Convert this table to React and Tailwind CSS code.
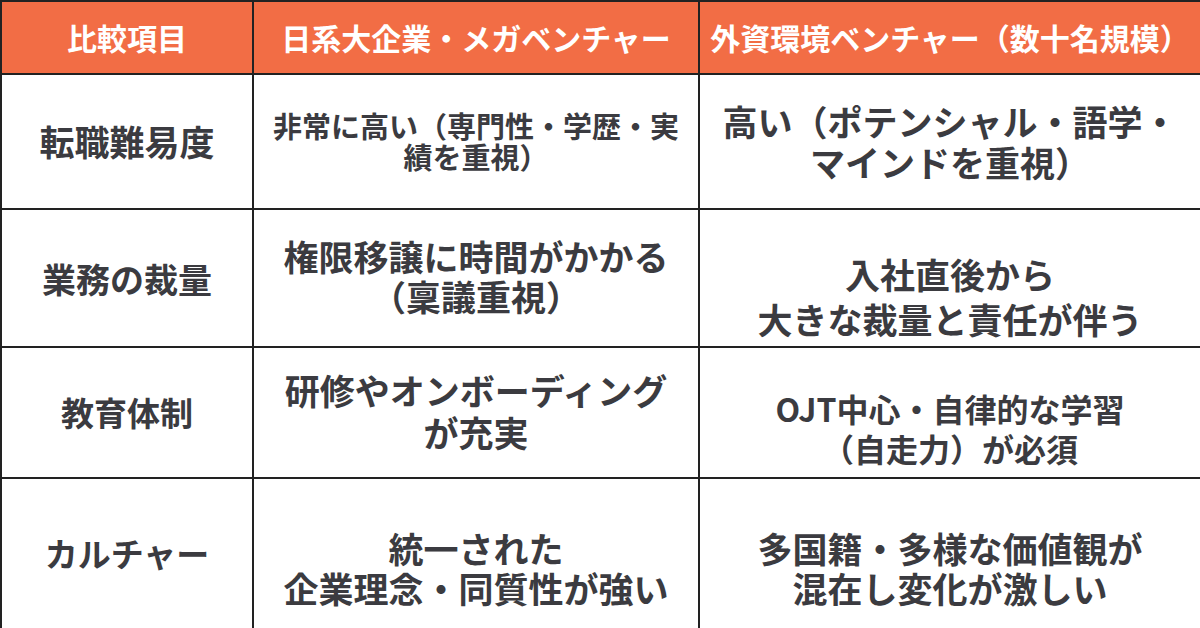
const headers = ["比較項目", "日系大企業・メガベンチャー", "外資環境ベンチャー（数十名規模）"];

const rows = [
  {
    label: "転職難易度",
    labelCls: "text-[35px]",
    cells: [
      { lines: ["非常に高い（専門性・学歴・実", "績を重視）"], cls: "text-[29px] leading-[31px] pb-[1px]" },
      { lines: ["高い（ポテンシャル・語学・", "マインドを重視）"], cls: "text-[35px] leading-[41px] pb-[2px]" },
    ],
  },
  {
    label: "業務の裁量",
    labelCls: "text-[34px]",
    cells: [
      { lines: ["権限移譲に時間がかかる", "（稟議重視）"], cls: "text-[35px] leading-[40px] pb-[4px]" },
      { lines: ["入社直後から", "大きな裁量と責任が伴う"], cls: "text-[35px] leading-[45px] pt-[36px]" },
    ],
  },
  {
    label: "教育体制",
    labelCls: "text-[33px]",
    cells: [
      { lines: ["研修やオンボーディング", "が充実"], cls: "text-[35px] leading-[42px] pb-[3px]" },
      { lines: ["OJT中心・自律的な学習", "（自走力）が必須"], cls: "text-[32px] leading-[40px] pt-[30px]" },
    ],
  },
  {
    label: "カルチャー",
    labelCls: "text-[33px]",
    cells: [
      { lines: ["統一された", "企業理念・同質性が強い"], cls: "text-[35px] leading-[40px] pt-[28px]" },
      { lines: ["多国籍・多様な価値観が", "混在し変化が激しい"], cls: "text-[35px] leading-[40px] pt-[28px]" },
    ],
  },
];

export default function App() {
  return (
    <div
      className="w-[1200px] h-[628px] bg-white text-[#3b3b40] font-bold"
      style={{ fontFamily: '"Noto Sans CJK JP", "Noto Sans", sans-serif' }}
    >
      <div className="grid grid-cols-[252px_446px_502px] grid-rows-[73px_135px_138px_131px_151px] h-full border-l-2 border-t-2 border-[#222]">
        {headers.map((h) => (
          <div
            key={h}
            className="flex items-center justify-center bg-[#f26d45] text-white text-[30px] whitespace-nowrap border-r-2 border-b-2 border-[#222]"
          >
            {h}
          </div>
        ))}
        {rows.map((r) => (
          <>
            <div
              key={r.label}
              className={`flex items-center justify-center whitespace-nowrap border-r-2 border-b-2 border-[#222] ${r.labelCls}`}
            >
              {r.label}
            </div>
            {r.cells.map((c, i) => (
              <div
                key={r.label + i}
                className={`flex flex-col items-center justify-center text-center whitespace-nowrap border-r-2 border-b-2 border-[#222] ${c.cls}`}
              >
                {c.lines.map((l) => (
                  <span key={l}>{l}</span>
                ))}
              </div>
            ))}
          </>
        ))}
      </div>
    </div>
  );
}
